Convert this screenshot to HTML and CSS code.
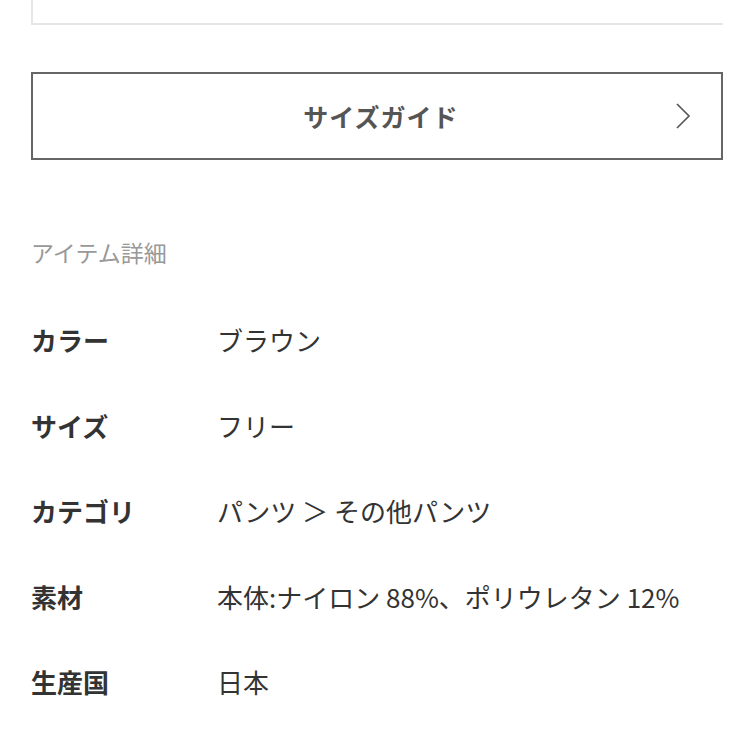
FILE: index.html
```html
<!DOCTYPE html>
<html>
	<head>
		<link rel="stylesheet" href="styles.css">
		<meta name="viewport" content="width=device-width, initial-scale=1.0">
	</head>
	<body>
	<div class="page">
		<div class="top-card"></div>

		<a class="size-guide" href="#">
			<span class="size-guide-text">サイズガイド</span>
			<svg class="chevron" width="16" height="26" viewBox="0 0 16 26">
				<polyline points="2,1 14,13 2,25" fill="none" stroke="#555" stroke-width="1.6"/>
			</svg>
		</a>

		<div class="detail">
			<div class="detail-title">アイテム詳細</div>
			<dl class="detail-list">
				<div class="detail-row">
					<dt>カラー</dt>
					<dd>ブラウン</dd>
				</div>
				<div class="detail-row">
					<dt>サイズ</dt>
					<dd>フリー</dd>
				</div>
				<div class="detail-row">
					<dt>カテゴリ</dt>
					<dd>パンツ ＞ その他パンツ</dd>
				</div>
				<div class="detail-row">
					<dt>素材</dt>
					<dd>本体:ナイロン 88%、ポリウレタン 12%</dd>
				</div>
				<div class="detail-row">
					<dt>生産国</dt>
					<dd>日本</dd>
				</div>
				<div class="detail-row">
					<dt>品番</dt>
					<dd>ショップ管理番号</dd>
				</div>
			</dl>
		</div>
	</div>
	</body>
</html>
```

FILE: styles.css
```css
body {
	margin: 0;
	background-color: #fff;
	font-family: "Noto Sans CJK JP", "Noto Sans", sans-serif;
	color: #333;
}

.page {
	padding: 0 31px;
	overflow: hidden;
	height: 754px;
}

.top-card {
	height: 23px;
	border-left: 2px solid #e6e6e6;
	border-bottom: 2px solid #e6e6e6;
}

.size-guide {
	display: flex;
	align-items: center;
	justify-content: center;
	position: relative;
	margin-top: 47px;
	height: 84px;
	padding-left: 8px;
	border: 2px solid #666;
	text-decoration: none;
}

.size-guide-text {
	font-size: 25px;
	font-weight: bold;
	color: #555;
	letter-spacing: 1px;
}

.chevron {
	position: absolute;
	right: 30px;
	top: 29px;
}

.detail {
	padding-top: 76px;
}

.detail-title {
	font-size: 23px;
	color: #999;
	line-height: 32px;
}

.detail-list {
	margin: 29px 0 0;
}

.detail-row {
	display: flex;
	align-items: center;
	height: 85.5px;
	font-size: 26px;
}

.detail-row dt {
	width: 186px;
	font-weight: bold;
	color: #333;
}

.detail-row dd {
	margin: 0;
	color: #333;
}
```
